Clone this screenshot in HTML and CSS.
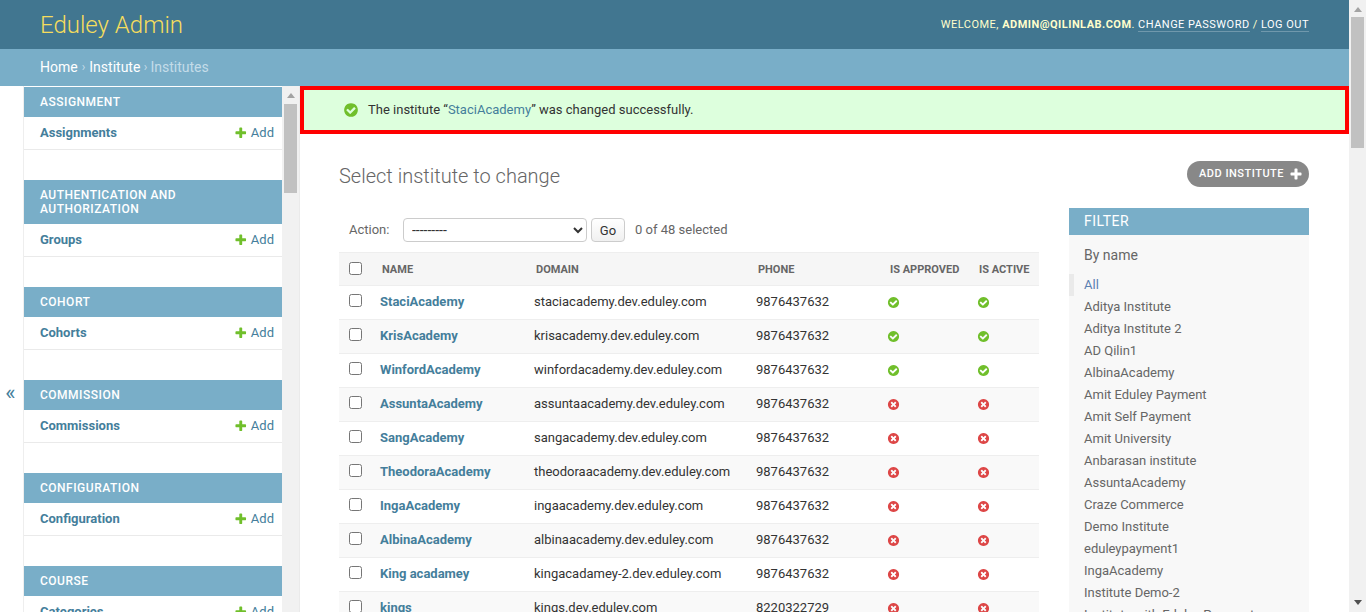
FILE: index.html
```html
<!DOCTYPE html>
<html lang="en">
<head>
    <meta charset="UTF-8">
    <meta name="viewport" content="width=device-width, initial-scale=1.0">
    <title>Select institute to change | Eduley Admin</title>
    <link rel="stylesheet" href="styles.css">
</head>
<body>

<svg class="icon-defs" xmlns="http://www.w3.org/2000/svg">
    <symbol id="icon-yes" viewBox="0 0 1792 1792"><path fill="#70bf2b" d="M1412 734q0-28-18-46l-91-90q-19-19-45-19t-45 19l-408 407-226-226q-19-19-45-19t-45 19l-91 90q-18 18-18 46 0 27 18 45l362 362q19 19 45 19 27 0 46-19l543-543q18-18 18-45zm252 162q0 209-103 385.5t-279.5 279.5-385.5 103-385.5-103-279.5-279.5-103-385.5 103-385.5 279.5-279.5 385.5-103 385.5 103 279.5 279.5 103 385.5z"/></symbol>
    <symbol id="icon-no" viewBox="0 0 1792 1792"><path fill="#dd4646" d="M1277 1122q0-26-19-45l-181-181 181-181q19-19 19-45 0-27-19-46l-90-90q-19-19-46-19-26 0-45 19l-181 181-181-181q-19-19-45-19-27 0-46 19l-90 90q-19 19-19 46 0 26 19 45l181 181-181 181q-19 19-19 45 0 27 19 46l90 90q19 19 46 19 26 0 45-19l181-181 181 181q19 19 45 19 27 0 46-19l90-90q19-19 19-46zm387-226q0 209-103 385.5t-279.5 279.5-385.5 103-385.5-103-279.5-279.5-103-385.5 103-385.5 279.5-279.5 385.5-103 385.5 103 279.5 279.5 103 385.5z"/></symbol>
    <symbol id="icon-add" viewBox="0 0 1792 1792"><path d="M1600 796v192q0 40-28 68t-68 28h-416v416q0 40-28 68t-68 28h-192q-40 0-68-28t-28-68v-416h-416q-40 0-68-28t-28-68v-192q0-40 28-68t68-28h416v-416q0-40 28-68t68-28h192q40 0 68 28t28 68v416h416q40 0 68 28t28 68z"/></symbol>
</svg>

<div class="window">
    <div class="page">
        <header class="header">
            <div class="branding">Eduley Admin</div>
            <div class="user-tools">
                Welcome, <strong>admin@qilinlab.com</strong>.
                <a href="#">Change password</a> / <a href="#">Log out</a>
            </div>
        </header>

        <div class="breadcrumbs">
            <a href="#">Home</a> <span class="sep">›</span> <a href="#">Institute</a> <span class="sep">›</span> Institutes
        </div>

        <div class="main">
            <button class="nav-toggle">«</button>

            <nav class="sidebar">
                <div class="sidebar-list">
                    <div class="app-module">
                        <div class="app-caption">Assignment</div>
                        <div class="app-row"><a class="model-link" href="#">Assignments</a><a class="add-link" href="#"><svg class="add-icon"><use href="#icon-add"/></svg>Add</a></div>
                    </div>
                    <div class="app-module">
                        <div class="app-caption">Authentication and Authorization</div>
                        <div class="app-row"><a class="model-link" href="#">Groups</a><a class="add-link" href="#"><svg class="add-icon"><use href="#icon-add"/></svg>Add</a></div>
                    </div>
                    <div class="app-module">
                        <div class="app-caption">Cohort</div>
                        <div class="app-row"><a class="model-link" href="#">Cohorts</a><a class="add-link" href="#"><svg class="add-icon"><use href="#icon-add"/></svg>Add</a></div>
                    </div>
                    <div class="app-module">
                        <div class="app-caption">Commission</div>
                        <div class="app-row"><a class="model-link" href="#">Commissions</a><a class="add-link" href="#"><svg class="add-icon"><use href="#icon-add"/></svg>Add</a></div>
                    </div>
                    <div class="app-module">
                        <div class="app-caption">Configuration</div>
                        <div class="app-row"><a class="model-link" href="#">Configuration</a><a class="add-link" href="#"><svg class="add-icon"><use href="#icon-add"/></svg>Add</a></div>
                    </div>
                    <div class="app-module">
                        <div class="app-caption">Course</div>
                        <div class="app-row"><a class="model-link" href="#">Categories</a><a class="add-link" href="#"><svg class="add-icon"><use href="#icon-add"/></svg>Add</a></div>
                    </div>
                </div>
                <div class="scrollbar scrollbar-side">
                    <span class="arrow-up"></span>
                    <span class="thumb"></span>
                </div>
            </nav>

            <main class="content-area">
                <ul class="messagelist">
                    <li class="success">
                        <svg class="message-icon"><use href="#icon-yes"/></svg>
                        <span>The institute “<a href="#">StaciAcademy</a>” was changed successfully.</span>
                    </li>
                </ul>

                <div class="content">
                    <div class="title-row">
                        <h1>Select institute to change</h1>
                        <a class="addlink" href="#">Add institute<svg class="addlink-icon"><use href="#icon-add"/></svg></a>
                    </div>

                    <div class="changelist">
                        <div class="changelist-form">
                            <div class="actions">
                                <label for="action">Action:</label>
                                <select id="action">
                                    <option>---------</option>
                                </select>
                                <button class="go-btn">Go</button>
                                <span class="counter">0 of 48 selected</span>
                            </div>

                            <table class="result-list">
                                <thead>
                                    <tr>
                                        <th class="col-check"><input type="checkbox"></th>
                                        <th class="col-name">Name</th>
                                        <th class="col-domain">Domain</th>
                                        <th class="col-phone">Phone</th>
                                        <th class="col-approved">Is approved</th>
                                        <th class="col-active">Is active</th>
                                    </tr>
                                </thead>
                                <tbody>
                                    <tr><td><input type="checkbox"></td><td><a href="#">StaciAcademy</a></td><td>staciacademy.dev.eduley.com</td><td>9876437632</td><td class="cell-approved"><svg class="bool-icon"><use href="#icon-yes"/></svg></td><td><svg class="bool-icon"><use href="#icon-yes"/></svg></td></tr>
                                    <tr><td><input type="checkbox"></td><td><a href="#">KrisAcademy</a></td><td>krisacademy.dev.eduley.com</td><td>9876437632</td><td class="cell-approved"><svg class="bool-icon"><use href="#icon-yes"/></svg></td><td><svg class="bool-icon"><use href="#icon-yes"/></svg></td></tr>
                                    <tr><td><input type="checkbox"></td><td><a href="#">WinfordAcademy</a></td><td>winfordacademy.dev.eduley.com</td><td>9876437632</td><td class="cell-approved"><svg class="bool-icon"><use href="#icon-yes"/></svg></td><td><svg class="bool-icon"><use href="#icon-yes"/></svg></td></tr>
                                    <tr><td><input type="checkbox"></td><td><a href="#">AssuntaAcademy</a></td><td>assuntaacademy.dev.eduley.com</td><td>9876437632</td><td class="cell-approved"><svg class="bool-icon"><use href="#icon-no"/></svg></td><td><svg class="bool-icon"><use href="#icon-no"/></svg></td></tr>
                                    <tr><td><input type="checkbox"></td><td><a href="#">SangAcademy</a></td><td>sangacademy.dev.eduley.com</td><td>9876437632</td><td class="cell-approved"><svg class="bool-icon"><use href="#icon-no"/></svg></td><td><svg class="bool-icon"><use href="#icon-no"/></svg></td></tr>
                                    <tr><td><input type="checkbox"></td><td><a href="#">TheodoraAcademy</a></td><td>theodoraacademy.dev.eduley.com</td><td>9876437632</td><td class="cell-approved"><svg class="bool-icon"><use href="#icon-no"/></svg></td><td><svg class="bool-icon"><use href="#icon-no"/></svg></td></tr>
                                    <tr><td><input type="checkbox"></td><td><a href="#">IngaAcademy</a></td><td>ingaacademy.dev.eduley.com</td><td>9876437632</td><td class="cell-approved"><svg class="bool-icon"><use href="#icon-no"/></svg></td><td><svg class="bool-icon"><use href="#icon-no"/></svg></td></tr>
                                    <tr><td><input type="checkbox"></td><td><a href="#">AlbinaAcademy</a></td><td>albinaacademy.dev.eduley.com</td><td>9876437632</td><td class="cell-approved"><svg class="bool-icon"><use href="#icon-no"/></svg></td><td><svg class="bool-icon"><use href="#icon-no"/></svg></td></tr>
                                    <tr><td><input type="checkbox"></td><td><a href="#">King acadamey</a></td><td>kingacadamey-2.dev.eduley.com</td><td>9876437632</td><td class="cell-approved"><svg class="bool-icon"><use href="#icon-no"/></svg></td><td><svg class="bool-icon"><use href="#icon-no"/></svg></td></tr>
                                    <tr><td><input type="checkbox"></td><td><a href="#">kings</a></td><td>kings.dev.eduley.com</td><td>8220322729</td><td class="cell-approved"><svg class="bool-icon"><use href="#icon-no"/></svg></td><td><svg class="bool-icon"><use href="#icon-no"/></svg></td></tr>
                                </tbody>
                            </table>
                        </div>

                        <aside class="filter">
                            <h2>Filter</h2>
                            <h3>By name</h3>
                            <ul>
                                <li class="selected"><a href="#">All</a></li>
                                <li><a href="#">Aditya Institute</a></li>
                                <li><a href="#">Aditya Institute 2</a></li>
                                <li><a href="#">AD Qilin1</a></li>
                                <li><a href="#">AlbinaAcademy</a></li>
                                <li><a href="#">Amit Eduley Payment</a></li>
                                <li><a href="#">Amit Self Payment</a></li>
                                <li><a href="#">Amit University</a></li>
                                <li><a href="#">Anbarasan institute</a></li>
                                <li><a href="#">AssuntaAcademy</a></li>
                                <li><a href="#">Craze Commerce</a></li>
                                <li><a href="#">Demo Institute</a></li>
                                <li><a href="#">eduleypayment1</a></li>
                                <li><a href="#">IngaAcademy</a></li>
                                <li><a href="#">Institute Demo-2</a></li>
                                <li><a href="#">Institute with Eduley Payment</a></li>
                            </ul>
                        </aside>
                    </div>
                </div>
            </main>
        </div>
    </div>

    <div class="scrollbar scrollbar-page">
        <span class="arrow-up"></span>
        <span class="thumb"></span>
        <span class="arrow-down"></span>
    </div>
</div>

</body>
</html>
```

FILE: styles.css
```css
* {
    box-sizing: border-box;
}
html, body {
    margin: 0;
    height: 100%;
    overflow: hidden;
}
body {
    font-family: Roboto, "Liberation Sans", sans-serif;
    font-size: 14px;
    color: #333;
    background: #fff;
}
a {
    color: #447e9b;
    text-decoration: none;
}
.icon-defs {
    display: none;
}
.window {
    display: flex;
    height: 612px;
    overflow: hidden;
}
.page {
    flex: 1;
    min-width: 0;
    overflow: hidden;
}

/* header */
.header {
    height: 49px;
    padding: 0 40px;
    display: flex;
    align-items: center;
    justify-content: space-between;
    background: #417690;
    color: #ffc;
}
.branding {
    font-size: 24px;
    font-weight: 300;
    color: #f5dd5d;
}
.user-tools {
    font-size: 11px;
    font-weight: 400;
    letter-spacing: 0.475px;
    text-transform: uppercase;
}
.user-tools strong {
    font-weight: 700;
}
.user-tools a {
    color: #fff;
    border-bottom: 1px solid rgba(255,255,255,0.25);
}
.breadcrumbs {
    height: 37px;
    padding: 0 40px 2px;
    display: flex;
    align-items: center;
    gap: 4px;
    background: #79aec8;
    color: #c4dce8;
    font-size: 14px;
}
.breadcrumbs a {
    color: #fff;
}
.breadcrumbs .sep {
    font-size: 12px;
}
.breadcrumbs .sep:last-of-type {
    margin: 0 -1px 0 -0.5px;
}

/* sidebar */
.main {
    display: flex;
    height: 612px;
}
.nav-toggle {
    flex: 0 0 24px;
    padding: 0 2px 0 0;
    border: 0;
    border-right: 1px solid #eee;
    background: #fff;
    color: #447e9b;
    font-family: Roboto, sans-serif;
    font-size: 22px;
}
.sidebar {
    flex: 0 0 276px;
    display: flex;
    height: 612px;
    border-right: 1px solid #eaeaea;
}
.sidebar-list {
    flex: 1;
    padding-top: 1px;
    overflow: hidden;
}
.app-module {
    margin-bottom: 30px;
}
.app-caption {
    padding: 8px 16px;
    background: #79aec8;
    color: #fff;
    font-size: 12px;
    font-weight: 500;
    line-height: 14px;
    letter-spacing: 0.5px;
    text-transform: uppercase;
}
.app-row {
    height: 33px;
    padding: 0 8px 1px 16px;
    display: flex;
    align-items: center;
    justify-content: space-between;
    border-bottom: 1px solid #eaeaea;
    font-size: 13px;
}
.model-link {
    font-weight: 700;
}
.add-link {
    display: flex;
    align-items: center;
    gap: 3px;
}
.add-icon {
    width: 13.5px;
    height: 13.5px;
    fill: #70bf2b;
}

/* scrollbars */
.scrollbar {
    flex: 0 0 17px;
    display: flex;
    flex-direction: column;
    align-items: center;
    background: #f1f1f1;
}
.scrollbar .thumb {
    width: 13px;
    background: #c1c1c1;
}
.scrollbar-side .thumb {
    height: 89px;
    margin-top: 6px;
}
.scrollbar-page .thumb {
    height: 131px;
    margin-top: 5px;
}
.arrow-up,
.arrow-down {
    width: 0;
    height: 0;
    border-left: 4px solid transparent;
    border-right: 4px solid transparent;
}
.arrow-up {
    margin-top: 7px;
    border-bottom: 5px solid #a3a3a3;
}
.arrow-down {
    margin-top: auto;
    margin-bottom: 7px;
    border-top: 5px solid #505050;
}

/* content */
.content-area {
    flex: 1;
    min-width: 0;
}
.messagelist {
    margin: 0;
    padding: 0;
    list-style: none;
}
.messagelist li {
    height: 48px;
    padding: 0 0 1px 39px;
    display: flex;
    align-items: center;
    gap: 9px;
    background: #dfd;
    border: 4px solid #f00;
    font-size: 13px;
    color: #333;
}
.message-icon {
    width: 16px;
    height: 16px;
}
.content {
    padding: 27px 40px 0 39px;
}
.title-row {
    display: flex;
    justify-content: space-between;
    align-items: flex-start;
    height: 47px;
}
h1 {
    margin: 0;
    padding-top: 3px;
    font-size: 20px;
    font-weight: 300;
    line-height: 24px;
    color: #666;
}
.addlink {
    height: 26px;
    padding: 0 6px 2px 12px;
    display: flex;
    align-items: center;
    gap: 5px;
    border-radius: 15px;
    background: #888;
    color: #fff;
    font-size: 11px;
    font-weight: 500;
    letter-spacing: 0.5px;
    text-transform: uppercase;
}
.addlink-icon {
    width: 14px;
    height: 14px;
    margin-top: 1px;
    fill: #fff;
}
.changelist {
    display: flex;
    justify-content: space-between;
    align-items: flex-start;
}
.changelist-form {
    width: 700px;
    padding-top: 10px;
}
.actions {
    height: 34px;
    padding: 0 10px;
    display: flex;
    align-items: flex-start;
    font-size: 13px;
    line-height: 24px;
    color: #666;
}
.actions label {
    width: 54px;
}
.actions select {
    width: 184px;
    height: 24px;
    padding: 0 4px;
    border: 1px solid #ccc;
    border-radius: 4px;
    background: #fff;
    color: #333;
    font-family: Roboto, sans-serif;
    font-size: 14px;
}
.go-btn {
    width: 34px;
    height: 24px;
    margin-left: 4px;
    padding: 0;
    border: 1px solid #ccc;
    border-radius: 4px;
    background: linear-gradient(#fff, #f0f0f0);
    color: #333;
    font-family: Roboto, sans-serif;
    font-size: 13px;
}
.counter {
    margin-left: 10px;
}

/* table */
.result-list {
    width: 700px;
    border-collapse: collapse;
    table-layout: fixed;
    font-size: 13px;
}
.result-list th {
    height: 33px;
    padding: 1px 0 0 2px;
    background: #f6f6f6;
    border-top: 1px solid #eee;
    border-bottom: 1px solid #eee;
    color: #666;
    font-size: 11px;
    font-weight: 700;
    text-align: left;
    text-transform: uppercase;
}
.result-list td {
    height: 34px;
    padding: 0 0 2px;
    border-bottom: 1px solid #eee;
    color: #333;
}
.result-list tbody tr:nth-child(even) {
    background: #f9f9f9;
}
.result-list a {
    font-weight: 700;
}
.result-list input {
    display: block;
    width: 13px;
    height: 13px;
    margin: 0 0 3px 10px;
}
.result-list th input {
    margin: 0 0 3px 8px;
}
.col-check { width: 41px; }
.col-name { width: 154px; }
.col-domain { width: 222px; }
.col-phone { width: 132px; }
.col-approved { width: 89px; }
.bool-icon {
    display: block;
    width: 13px;
    height: 13px;
    margin-top: 2px;
}
.cell-approved .bool-icon {
    margin-left: -1px;
}

/* filter */
.filter {
    flex: 0 0 240px;
    height: 500px;
    background: #f8f8f8;
}
.filter h2 {
    margin: 0;
    height: 27px;
    padding: 0 15px 2px;
    display: flex;
    align-items: center;
    background: #79aec8;
    color: #fff;
    font-size: 14px;
    font-weight: 400;
    letter-spacing: 0.5px;
    text-transform: uppercase;
}
.filter h3 {
    margin: 0;
    padding: 12px 15px 11px;
    font-size: 14px;
    font-weight: 400;
    line-height: 16px;
    color: #666;
}
.filter ul {
    margin: 0;
    padding: 0;
    list-style: none;
}
.filter li {
    height: 22px;
    padding-left: 15px;
    line-height: 22px;
    font-size: 13px;
}
.filter li a {
    color: #666;
}
.filter li.selected {
    border-left: 5px solid #eaeaea;
    padding-left: 10px;
}
.filter li.selected a {
    color: #5b80b2;
}
```
